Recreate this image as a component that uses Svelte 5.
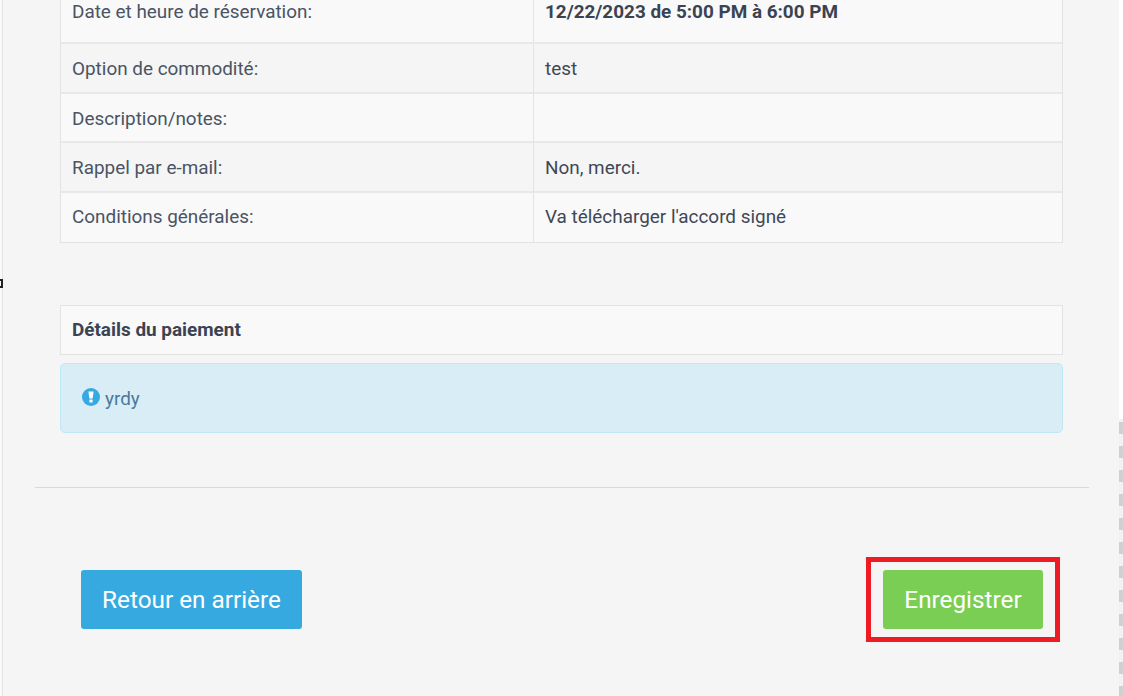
<script>
  const rows = [
    { label: 'Date et heure de réservation:', value: '12/22/2023 de 5:00 PM à 6:00 PM', cls: 'first', strong: true },
    { label: 'Option de commodité:', value: 'test', cls: 'odd h50' },
    { label: 'Description/notes:', value: '', cls: 'h49' },
    { label: 'Rappel par e-mail:', value: 'Non, merci.', cls: 'odd h50' },
    { label: 'Conditions générales:', value: "Va télécharger l'accord signé", cls: 'h50' }
  ];
</script>

<div class="page">
  <div class="edge-left"><span class="mark"></span></div>
  <main class="content">
    <div class="rows">
      {#each rows as r}
        <div class="row {r.cls}">
          <div class="cell lab">{r.label}</div>
          <div class="cell val" class:strong={r.strong}>{r.value}</div>
        </div>
      {/each}
    </div>
    <div class="pay-head">Détails du paiement</div>
    <div class="alert">
      <svg class="ic" viewBox="0 0 18 18" width="18" height="18" aria-hidden="true">
        <circle cx="9" cy="9" r="9" fill="#36a9e1" />
        <path d="M6.4 3.6h5.2l-1 6.8H7.4z" fill="#fff" />
        <rect x="7.4" y="11.4" width="3.2" height="3" rx=".5" fill="#fff" />
      </svg>
      <span>yrdy</span>
    </div>
    <hr class="rule" />
    <div class="actions">
      <button class="btn blue">Retour en arrière</button>
      <span class="highlight"><button class="btn green">Enregistrer</button></span>
    </div>
  </main>
  <div class="edge-right">
    <div class="stripes"></div>
  </div>
</div>

<style>
  :global(body) {
    margin: 0;
    background: #f5f5f5;
    font-family: Roboto, "Liberation Sans", sans-serif;
  }
  .page {
    width: 1123px;
    height: 696px;
    overflow: hidden;
    display: flex;
    background: #f5f5f5;
    color: #4a5464;
  }
  .edge-left {
    width: 3px;
    flex: none;
    background: #f9f9f9;
    border-right: 1px solid #e4e4e4;
    box-sizing: border-box;
    position: relative;
  }
  .mark {
    position: absolute;
    left: 0;
    top: 279px;
    width: 3px;
    height: 9px;
    border: 2px solid #222;
    border-left: none;
    box-sizing: border-box;
  }
  .content {
    flex: 1;
    min-width: 0;
    padding: 0 30px 0 32px;
  }
  .rows {
    margin: 0 26px 0 25px;
    border: 1px solid #e3e3e3;
    border-top: none;
    background: #f9f9f9;
  }
  .row {
    display: grid;
    grid-template-columns: 472px 1fr;
    border-bottom: 2px solid #e8e8e8;
    box-sizing: border-box;
  }
  .first { height: 44px; }
  .h50 { height: 50px; }
  .h49 { height: 49px; }
  .row:last-child { height: 49px; border-bottom: none; }
  .row:last-child .cell { line-height: 48px; }
  .odd { background: #f5f5f5; }
  .cell {
    padding: 0 11px;
    font-size: 18.9px;
    line-height: 49px;
    white-space: nowrap;
  }
  .first .cell { line-height: 24px; }
  .val {
    border-left: 1px solid #e3e3e3;
    color: #3f4856;
  }
  .strong { font-weight: 700; color: #3a4352; }
  .pay-head {
    margin: 62px 26px 0 25px;
    height: 50px;
    box-sizing: border-box;
    border: 1px solid #e3e3e3;
    background: #f9f9f9;
    padding: 0 11px;
    font-size: 18.9px;
    font-weight: 700;
    line-height: 47px;
    color: #3a4352;
  }
  .alert {
    margin: 8px 26px 0 25px;
    height: 70px;
    box-sizing: border-box;
    background: #d8edf6;
    border: 1px solid #bfe8f4;
    border-radius: 5px;
    padding: 0 21px;
    display: flex;
    align-items: center;
    gap: 5px;
    font-size: 18.9px;
    color: #4a7a9a;
  }
  .ic { flex: none; margin-top: -3px; }
  .rule {
    margin: 54px 0 0;
    border: none;
    border-top: 1px solid #d9d9d9;
  }
  .actions {
    display: flex;
    justify-content: space-between;
    align-items: center;
    margin: 82px 29px 0 46px;
  }
  .btn {
    height: 59px;
    border: none;
    border-radius: 3px;
    color: #fff;
    font-family: inherit;
    font-size: 24.3px;
    padding: 0;
    display: block;
  }
  .blue { background: #36a9e1; width: 221px; }
  .green { background: #7bce54; width: 160px; }
  .highlight {
    display: block;
    border: 5px solid #ed1c24;
    padding: 8px 12px;
    margin: -13px 0;
  }
  .edge-right {
    width: 4px;
    flex: none;
    background: #fff;
    position: relative;
  }
  .stripes {
    position: absolute;
    left: 0;
    right: 0;
    top: 419px;
    bottom: 0;
    background: repeating-linear-gradient(#f2f2f2 0 3px, #d0d0d0 3px 15px, #f2f2f2 15px 24px);
  }
</style>
